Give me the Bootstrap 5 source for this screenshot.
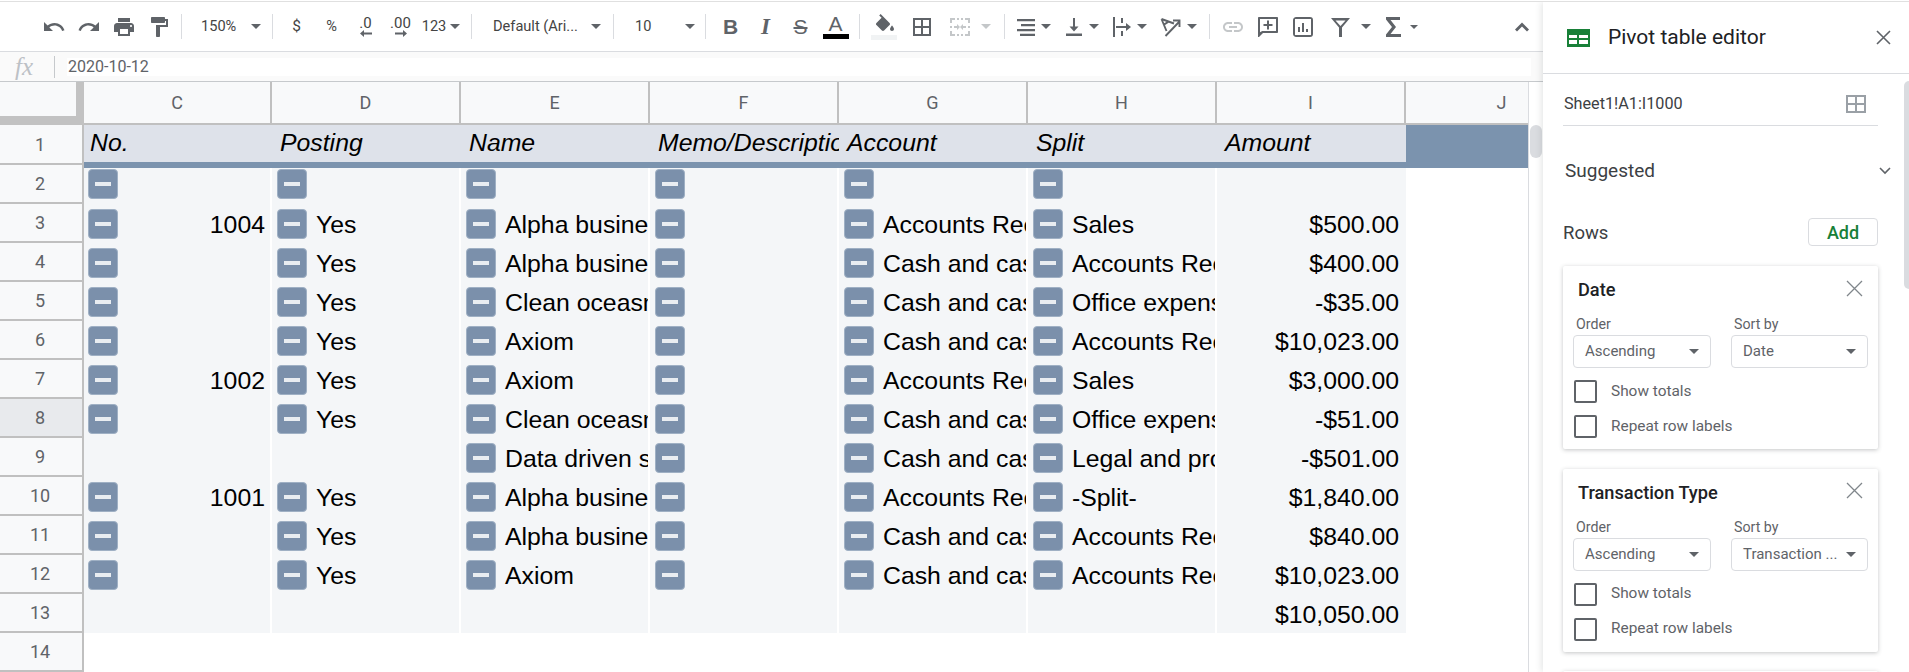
<!DOCTYPE html>
<html lang="en">
  <head>
    <meta charset="UTF-8" />
    <meta name="viewport" content="width=device-width, initial-scale=1.0" />
    <title>Pivot table</title>
    <link rel="stylesheet" href="https://cdn.jsdelivr.net/npm/bootstrap@5.3.0/dist/css/bootstrap.min.css" />
    <style>
      html, body { height: 672px; overflow: hidden; background: #fff; }
      body { font-family: Roboto, "Liberation Sans", sans-serif; color: #444; padding-top: 1px; }
      .app { height: 671px; border-top: 1px solid #e0e0e0; overflow: hidden; }

      .sheet-side { width: 1543px; flex: none; }
      .toolbar { height: 50px; border-bottom: 1px solid #dadce0; padding-left: 36px; font-size: 14.6px; color: #444; }
      .tb { width: 35px; height: 30px; flex: none; display: flex; align-items: center; justify-content: center; gap: 4px; }
      .tb svg { fill: #5f6368; display: block; }
      .tb-wide { width: 48px; gap: 6px; }
      .tb-merge { width: 52px; gap: 10px; }
      .tb-123 { width: 46px; gap: 4px; }
      .tb-filter { width: 52px; gap: 11px; }
      .tb-sigma { width: 50px; gap: 9px; }
      .tb-zoom { width: 90px; justify-content: space-between; padding: 0 11px 0 19px; }
      .tb-font { width: 141px; justify-content: space-between; padding: 0 12px 0 21px; }
      .tb-size { width: 91px; justify-content: space-between; padding: 0 10px 0 21px; }
      .tb-sep { width: 1px; height: 25px; background: #dadce0; flex: none; }
      .tb-gap-sm { width: 3px; flex: none; }
      .tb-gap { width: 5px; flex: none; }
      .tb-gap-six { width: 6px; flex: none; }
      .tb-gap-md { width: 7px; flex: none; }
      .tb-gap-lg { width: 8px; flex: none; }
      .tb-up { margin-right: 4px; }
      .caret { width: 0; height: 0; border-left: 5px solid transparent; border-right: 5px solid transparent; border-top: 5px solid #5f6368; flex: none; }
      .caret-off { border-top-color: #c4c7c9; }
      .caret-sm { border-left-width: 4px; border-right-width: 4px; border-top-width: 4px; }
      .tb-sym { font-size: 15.5px; padding-left: 2px; }
      .tb-pct { padding-left: 2px; }
      .dec { flex-direction: column; gap: 0; line-height: 15px; font-size: 15px; }
      .dec svg { margin-top: -1px; }
      .colour-icon { flex-direction: column; gap: 0; }
      .colour-bar { width: 26px; height: 5px; background: #000; margin-top: 1px; }
      .colour-bar-fill { background: #f1f3f4; }
      .tb-letter { font-size: 21px; line-height: 19px; color: #5f6368; font-weight: 500; font-family: "Liberation Sans", sans-serif; }
      .tb-italic { font-family: "Liberation Serif", serif; font-size: 23px; font-style: italic; font-weight: 700; }

      .formula { height: 30px; background: #fafafa; border-bottom: 1px solid #c6c9cc; color: #5f6368; font-size: 16px; padding-right: 12px; }
      .formula .fx { width: 54px; flex: none; font-family: "Liberation Serif", serif; font-style: italic; font-size: 25px; color: #bdc1c6; padding-left: 15px; line-height: 28px; }
      .formula .fx-sep { width: 1px; height: 22px; background: #c6c9cc; flex: none; }
      .formula .fx-input { background: #fff; height: 18px; line-height: 18px; margin-left: 12px; padding-left: 1px; }

      .corner { width: 84px; flex: none; height: 43px; background: #f8f9fa; border-right: 8px solid #c2c2c2; border-bottom: 9px solid #c2c2c2; }
      .col-heads { height: 43px; }
      .col-head { width: 189px; flex: none; height: 43px; background: #f8f9fa; border-right: 2px solid #c0c0c0; border-bottom: 2px solid #c0c0c0; color: #5f6368; font-size: 18px; display: flex; align-items: center; justify-content: center; }
      .col-head:first-child { width: 188px; }
      .col-head.j { width: 122px; border-right: 0; padding-left: 69px; }
      .grid-main { width: 1528px; flex: none; }
      .gutter { width: 15px; flex: none; border-left: 1px solid #dadce0; background: #fff; padding: 43px 1px 0 1px; }
      .thumb { height: 33px; background: #dadce0; border-radius: 6px; }

      .row-nums { width: 84px; flex: none; }
      .row-num { height: 39px; background: #f8f9fa; border-right: 2px solid #c0c0c0; border-bottom: 2px solid #c0c0c0; color: #5f6368; font-size: 18px; display: flex; align-items: center; justify-content: center; padding-right: 2px; }
      .row-num.first { height: 40px; }
      .row-num.active { background: #e8eaed; }

      .data { font-family: "Liberation Sans", Arial, sans-serif; font-size: 24.8px; color: #000; }
      .head-row { height: 43px; }
      .h-cell { width: 189px; flex: none; height: 43px; background: #dee2ea; border-bottom: 6px solid #7b93ae; font-style: italic; padding-left: 8px; line-height: 36px; overflow: hidden; white-space: nowrap; }
      .h-cell:first-child { width: 188px; padding-left: 6px; }
      .h-fill { width: 122px; flex: none; height: 43px; background: #7b93ae; }
      .d-row { height: 39px; }
      .d-row.second { height: 36px; align-items: flex-end; }
      .d-row.second .cell { height: 36px; padding-bottom: 5px; align-items: flex-end; }
      .cell { width: 189px; height: 39px; flex: none; background: #f4f6f8; border-right: 2px solid #fff; display: flex; align-items: center; gap: 9px; padding-left: 5px; padding-right: 5px; overflow: hidden; white-space: nowrap; }
      .cell:first-child { width: 188px; padding-left: 4px; padding-right: 5px; }
      .cell:nth-child(7) { border-right: 0; padding-right: 7px; }
      .cell span:not(.dash) { padding-top: 2px; }
      .toggle { width: 30px; height: 30px; flex: none; padding: 0; border: 1px solid #9fb0c4; border-radius: 4px; background: #7b90ab; display: flex; align-items: center; justify-content: center; }
      .toggle .dash { display: block; width: 16px; height: 4px; background: #e9edf1; }

      .panel { width: 366px; flex: none; box-shadow: -2px 0 6px rgba(60, 64, 67, .12); padding-top: 0; font-family: Roboto, sans-serif; }
      .panel-head { height: 72px; padding: 0 18px 0 24px; border-bottom: 1px solid #dadce0; }
      .panel-title { font-size: 21px; color: #202124; margin-left: 18px; }
      .panel-close { margin-left: auto; }
      .panel-body { padding: 0 31px 0 20px; }
      .range { height: 52px; border-bottom: 1px solid #dadce0; font-size: 16.2px; color: #3c4043; padding: 9px 12px 0 1px; }
      .suggested { height: 92px; font-size: 19px; color: #3c4043; padding: 0 0 2px 2px; margin-right: -13px; }
      .rows-head { font-size: 18.5px; color: #3c4043; height: 28px; margin-bottom: 20px; }
      .rows-head span { padding-top: 4px; }
      .btn-add { width: 70px; height: 28px; padding: 0; border: 1px solid #dadce0; border-radius: 4px; color: #188038; font-size: 18px; font-weight: 500; line-height: 25px; background: #fff; }
      .btn-add:hover { color: #188038; border-color: #dadce0; }
      .pv-card { width: 315px; height: 183px; margin-bottom: 19.5px; border: 0; border-radius: 2px; box-shadow: 0 1px 4px rgba(60, 64, 67, .3); padding: 14px 10px 0 10px; }
      .pv-title { font-size: 18.2px; font-weight: 500; color: #202124; padding-left: 5px; height: 20px; line-height: 20px; }
      .pv-x { margin-left: auto; margin-right: 5px; margin-top: -4px; }
      .pv-label { font-size: 14.2px; color: #5f6368; height: 18px; line-height: 18px; padding-left: 3px; margin-top: 15px; margin-bottom: 2px; }
      .pv-col { width: 138px; flex: none; }
      .pv-col + .pv-col { margin-left: 20px; width: 137px; }
      .pv-select { height: 33px; border: 1px solid #dadce0; border-radius: 4px; font-size: 15px; color: #5f6368; padding: 0 11px 0 11px; white-space: nowrap; }
      .pv-check { height: 23px; margin: 0 0 12px 1px; gap: 14px; min-height: 0; padding: 0; font-size: 15.4px; color: #5f6368; }
      .pv-check .form-check-input { width: 23px; height: 23px; border: 2px solid #5f6368; border-radius: 2px; margin: 0; float: none; flex: none; }
      .pv-checks { margin-top: 12px; }
      .panel-scroll { position: absolute; right: 0; top: 79px; width: 5px; height: 208px; background: #dadce0; border-radius: 5px 0 0 5px; }
    </style>
  </head>
  <body>
    <div class="app d-flex">
      <div class="sheet-side d-flex flex-column">
        <div class="toolbar d-flex align-items-center flex-shrink-0">
          <div class="tb"><svg width="24" height="24" viewBox="0 0 24 24"><path d="M12.5 8c-2.65 0-5.05.99-6.9 2.6L2 7v9h9l-3.62-3.62c1.39-1.16 3.16-1.88 5.12-1.88 3.54 0 6.55 2.31 7.6 5.5l2.37-.78C21.08 11.03 17.15 8 12.5 8z"/></svg></div>
          <div class="tb"><svg width="24" height="24" viewBox="0 0 24 24"><path d="M18.4 10.6C16.55 8.99 14.15 8 11.5 8c-4.65 0-8.58 3.03-9.96 7.22L3.9 16c1.05-3.19 4.05-5.5 7.6-5.5 1.95 0 3.73.72 5.12 1.88L13 16h9V7l-3.6 3.6z"/></svg></div>
          <div class="tb"><svg width="24" height="24" viewBox="0 0 24 24"><path d="M19 8H5c-1.66 0-3 1.34-3 3v6h4v4h12v-4h4v-6c0-1.66-1.34-3-3-3zm-3 11H8v-5h8v5zm3-7c-.55 0-1-.45-1-1s.45-1 1-1 1 .45 1 1-.45 1-1 1zm-1-9H6v4h12V3z"/></svg></div>
          <div class="tb"><svg width="24" height="24" viewBox="0 0 24 24"><path d="M18 4V3c0-.55-.45-1-1-1H5c-.55 0-1 .45-1 1v4c0 .55.45 1 1 1h12c.55 0 1-.45 1-1V6h1v4H9v11c0 .55.45 1 1 1h2c.55 0 1-.45 1-1v-9h8V4h-3z"/></svg></div>
          <div class="tb-gap"></div>
          <div class="tb-sep"></div>
          <div class="tb tb-zoom"><span>150%</span><span class="caret"></span></div>
          <div class="tb-sep"></div>
          <div class="tb-gap"></div>
          <div class="tb tb-sym">$</div>
          <div class="tb tb-pct">%</div>
          <div class="tb dec"><span>.0</span><svg width="12" height="7" viewBox="0 0 12 7"><path d="M4 0v2.5h8v2H4V7L0 3.5z"/></svg></div>
          <div class="tb dec"><span>.00</span><svg width="12" height="7" viewBox="0 0 12 7"><path d="M8 0v2.5H0v2h8V7l4-3.5z"/></svg></div>
          <div class="tb tb-123"><span>123</span><span class="caret"></span></div>
          <div class="tb-gap-md"></div>
          <div class="tb-sep"></div>
          <div class="tb tb-font"><span>Default (Ari...</span><span class="caret"></span></div>
          <div class="tb-sep"></div>
          <div class="tb tb-size"><span>10</span><span class="caret"></span></div>
          <div class="tb-sep"></div>
          <div class="tb-gap-md"></div>
          <div class="tb"><span class="tb-letter fw-bold">B</span></div>
          <div class="tb"><span class="tb-letter tb-italic">I</span></div>
          <div class="tb"><span class="tb-letter text-decoration-line-through">S</span></div>
          <div class="tb colour-icon"><span class="tb-letter">A</span><span class="colour-bar"></span></div>
          <div class="tb-gap-six"></div>
          <div class="tb-sep"></div>
          <div class="tb-gap-six"></div>
          <div class="tb colour-icon"><svg width="22" height="20" viewBox="0 0 22 20"><path d="M16.56 8.94L7.62 0 6.21 1.41l2.38 2.38-5.15 5.15c-.59.59-.59 1.54 0 2.12l5.5 5.5c.29.29.68.44 1.06.44s.77-.15 1.06-.44l5.5-5.5c.59-.58.59-1.53 0-2.12zM5.21 10h9.58L10 5.21zM19 11.5s-2 2.17-2 3.5c0 1.1.9 2 2 2s2-.9 2-2c0-1.33-2-3.5-2-3.5z"/></svg><span class="colour-bar colour-bar-fill"></span></div>
          <div class="tb-gap-sm"></div>
          <div class="tb"><svg width="24" height="24" viewBox="0 0 24 24"><path d="M3 3v18h18V3H3zm8 16H5v-6h6v6zm0-8H5V5h6v6zm8 8h-6v-6h6v6zm0-8h-6V5h6v6z"/></svg></div>
          <div class="tb-gap"></div>
          <div class="tb tb-merge"><svg width="22" height="22" viewBox="0 0 22 22"><path style="fill:#c4c7c9" d="M1 2h5v2H3v3H1zm15 0h5v5h-2V4h-3zM1 15h2v3h3v2H1zm18 0h2v5h-5v-2h3zM1 10h2v2H1zm18 0h2v2h-2zM5 10h3V8l3 3-3 3v-2H5zm12 0h-3V8l-3 3 3 3v-2h3zM8 2h2v2H8zm4 0h2v2h-2zM8 18h2v2H8zm4 0h2v2h-2z"/></svg><span class="caret caret-off"></span></div>
          <div class="tb-gap-lg"></div>
          <div class="tb-sep"></div>
          <div class="tb-gap"></div>
          <div class="tb tb-wide"><svg width="18" height="18" viewBox="0 0 18 18"><path d="M0 1h18v2.2H0zm4 5h14v2.2H4zM0 11h18v2.2H0zm3 4.8h15V18H3z"/></svg><span class="caret"></span></div>
          <div class="tb tb-wide"><svg width="18" height="18" viewBox="0 0 18 18"><path d="M8 0h2v8.5h3.5L9 13.5 4.5 8.5H8zM1 15.5h16V18H1z"/></svg><span class="caret"></span></div>
          <div class="tb tb-wide"><svg width="18" height="20" viewBox="0 0 18 20"><path d="M0 0h2v20H0zM8 1h2v5H8zm0 13h2v5H8zM3 9h10V6l5 4-5 4v-3H3z"/></svg><span class="caret"></span></div>
          <div class="tb tb-wide"><svg width="21" height="20" viewBox="0 0 21 20"><path d="M1.500 2L14 6.500M1.500 2L6.500 14M3.800 7.800L8.500 4.600M5.500 19L19 5M13 3.500h6.500V10" fill="none" stroke="#5f6368" stroke-width="1.900"/></svg><span class="caret"></span></div>
          <div class="tb-gap-md"></div>
          <div class="tb-sep"></div>
          <div class="tb-gap"></div>
          <div class="tb"><svg width="24" height="24" viewBox="0 0 24 24"><path style="fill:#c4c7c9" d="M3.9 12c0-1.71 1.39-3.1 3.1-3.1h4V7H7c-2.76 0-5 2.24-5 5s2.24 5 5 5h4v-1.9H7c-1.71 0-3.1-1.39-3.1-3.1zM8 13h8v-2H8v2zm9-6h-4v1.9h4c1.71 0 3.1 1.39 3.1 3.1s-1.39 3.1-3.1 3.1h-4V17h4c2.76 0 5-2.24 5-5s-2.24-5-5-5z"/></svg></div>
          <div class="tb"><svg width="22" height="22" viewBox="0 0 22 22"><path d="M2 1h18c.55 0 1 .45 1 1v14c0 .55-.45 1-1 1H6l-4 4H1V2c0-.55.45-1 1-1zm1 2v13.2L5.2 15H19V3zm7 1.500h2V8h3.5v2H12v3.5h-2V10H6.500V8H10z"/></svg></div>
          <div class="tb"><svg width="24" height="24" viewBox="0 0 24 24"><path d="M19 2H5C3.900 2 2 3 2 5v14c0 2 1.900 3 3 3h14c2 0 3-1 3-3V5c0-2-1-3-3-3zm1 18H4V4h16zM7 12h2v5H7zm4-4h2v9h-2zm4 6h2v3h-2z"/></svg></div>
          <div class="tb-gap"></div>
          <div class="tb tb-filter"><svg width="19" height="20" viewBox="0 0 19 20"><path fill-rule="evenodd" d="M0 1h19l-8 9.500V20H8v-9.500zm4.500 2.500L9.500 9l5-5.500z"/></svg><span class="caret"></span></div>
          <div class="tb tb-sigma"><svg width="15" height="20" viewBox="0 0 15 20"><path d="M0 0h14v3H4.500l5.500 7-5.500 7H15v3H0v-2.500L6 10 0 2.500z"/></svg><span class="caret caret-sm"></span></div>
          <div class="ms-auto tb tb-up"><svg width="24" height="24" viewBox="0 0 24 24"><path d="M7 16.500L12 11.500l5 5 2-2-7-7-7 7z"/></svg></div>
        </div>

        <div class="formula d-flex align-items-center flex-shrink-0">
          <div class="fx">fx</div>
          <div class="fx-sep"></div>
          <div class="fx-input flex-grow-1">2020-10-12</div>
        </div>

        <div class="d-flex flex-grow-1 overflow-hidden">
          <div class="grid-main">
            <div class="col-heads d-flex">
              <div class="corner"></div>
              <div class="d-flex" id="colHeads"></div>
            </div>
            <div class="d-flex">
              <div class="row-nums" id="rowNums"></div>
              <div class="data flex-grow-1">
                <div class="head-row d-flex" id="headRow"></div>
                <div id="dataRows"></div>
              </div>
            </div>
          </div>
          <div class="gutter"><div class="thumb"></div></div>
        </div>
      </div>

      <aside class="panel position-relative">
        <div class="panel-head d-flex align-items-center">
          <svg width="23" height="18" viewBox="0 0 23 18"><path fill="#188038" fill-rule="evenodd" d="M0 0h23v18H0zM2 6v3h8V6zm10 0v3h9V6zM2 11v4h8v-4zm10 0v4h9v-4z"/></svg>
          <span class="panel-title">Pivot table editor</span>
          <svg class="panel-close" width="15" height="15" viewBox="0 0 15 15"><path d="M1 1l13 13M14 1L1 14" stroke="#5f6368" stroke-width="1.6"/></svg>
        </div>
        <div class="panel-body">
          <div class="range d-flex align-items-center justify-content-between">
            <span>Sheet1!A1:I1000</span>
            <svg width="20" height="18" viewBox="0 0 20 18"><path fill="#9aa0a6" fill-rule="evenodd" d="M0 0h20v18H0zM2 2v6h7V2zm9 0v6h7V2zM2 10v6h7v-6zm9 0v6h7v-6z"/></svg>
          </div>
          <div class="suggested d-flex align-items-center justify-content-between">
            <span>Suggested</span>
            <svg width="12" height="8" viewBox="0 0 12 8"><path d="M1 1l5 5 5-5" fill="none" stroke="#5f6368" stroke-width="1.6"/></svg>
          </div>
          <div class="rows-head d-flex align-items-center justify-content-between">
            <span>Rows</span>
            <button class="btn btn-add">Add</button>
          </div>
          <div id="cards"></div>
        </div>
        <div class="panel-scroll"></div>
      </aside>
    </div>

    <script src="https://cdn.jsdelivr.net/npm/bootstrap@5.3.0/dist/js/bootstrap.bundle.min.js"></script>
    <script>
      const colLetters = ["C", "D", "E", "F", "G", "H", "I"];
      const headers = ["No.", "Posting", "Name", "Memo/Description", "Account", "Split", "Amount"];
      // no, posting, name, account, split, amount ("" = no toggle in that cell)
      const rows = [
        ["-", "-", "-", "-", "-", ""],
        ["1004", "Yes", "Alpha business", "Accounts Receivable", "Sales", "$500.00"],
        ["-", "Yes", "Alpha business", "Cash and cash equivalents", "Accounts Receivable", "$400.00"],
        ["-", "Yes", "Clean oceasn", "Cash and cash equivalents", "Office expenses", "-$35.00"],
        ["-", "Yes", "Axiom", "Cash and cash equivalents", "Accounts Receivable", "$10,023.00"],
        ["1002", "Yes", "Axiom", "Accounts Receivable", "Sales", "$3,000.00"],
        ["-", "Yes", "Clean oceasn", "Cash and cash equivalents", "Office expenses", "-$51.00"],
        ["", "", "Data driven solutions", "Cash and cash equivalents", "Legal and professional", "-$501.00"],
        ["1001", "Yes", "Alpha business", "Accounts Receivable", "-Split-", "$1,840.00"],
        ["-", "Yes", "Alpha business", "Cash and cash equivalents", "Accounts Receivable", "$840.00"],
        ["-", "Yes", "Axiom", "Cash and cash equivalents", "Accounts Receivable", "$10,023.00"],
        [null, null, null, null, null, "$10,050.00"]
      ];
      const pivots = [
        { title: "Date", sort: "Date" },
        { title: "Transaction Type", sort: "Transaction ..." }
      ];

      const toggle = '<button class="btn toggle"><span class="dash"></span></button>';
      const label = (v) => (v && v !== "-" ? v : "");

      document.getElementById("colHeads").innerHTML =
        colLetters.map((c) => `<div class="col-head">${c}</div>`).join("") + '<div class="col-head j">J</div>';

      let nums = "";
      for (let i = 1; i <= 15; i++) {
        nums += `<div class="row-num${i === 1 ? " first" : ""}${i === 8 ? " active" : ""}">${i}</div>`;
      }
      document.getElementById("rowNums").innerHTML = nums;

      document.getElementById("headRow").innerHTML =
        headers.map((h) => `<div class="h-cell">${h}</div>`).join("") + '<div class="h-fill"></div>';

      function renderRows() {
        let html = "";
        rows.forEach((r, i) => {
          const [no, posting, name, account, split, amount] = r;
          const hasToggle = (v) => v !== null && v !== "";
          html += `<div class="d-row d-flex${i === 0 ? " second" : ""}">
            <div class="cell">${hasToggle(no) ? toggle : ""}<span class="ms-auto">${label(no)}</span></div>
            <div class="cell">${hasToggle(posting) ? toggle : ""}<span>${label(posting)}</span></div>
            <div class="cell">${hasToggle(name) ? toggle : ""}<span>${label(name)}</span></div>
            <div class="cell">${hasToggle(name) ? toggle : ""}</div>
            <div class="cell">${hasToggle(account) ? toggle : ""}<span>${label(account)}</span></div>
            <div class="cell">${hasToggle(split) ? toggle : ""}<span>${label(split)}</span></div>
            <div class="cell"><span class="ms-auto">${amount}</span></div>
          </div>`;
        });
        document.getElementById("dataRows").innerHTML = html;
      }
      renderRows();

      function renderCards() {
        document.getElementById("cards").innerHTML = pivots.map((p) => `
          <div class="card pv-card">
            <div class="d-flex align-items-center">
              <span class="pv-title">${p.title}</span>
              <svg class="pv-x" width="17" height="17" viewBox="0 0 17 17"><path d="M1 1l15 15M16 1L1 16" stroke="#80868b" stroke-width="1.3"/></svg>
            </div>
            <div class="d-flex">
              <div class="pv-col">
                <div class="pv-label">Order</div>
                <div class="pv-select d-flex align-items-center justify-content-between"><span>Ascending</span><span class="caret"></span></div>
              </div>
              <div class="pv-col">
                <div class="pv-label">Sort by</div>
                <div class="pv-select d-flex align-items-center justify-content-between"><span>${p.sort}</span><span class="caret"></span></div>
              </div>
            </div>
            <div class="pv-checks">
              <div class="form-check d-flex align-items-center pv-check"><input class="form-check-input" type="checkbox" /><label class="form-check-label">Show totals</label></div>
              <div class="form-check d-flex align-items-center pv-check"><input class="form-check-input" type="checkbox" /><label class="form-check-label">Repeat row labels</label></div>
            </div>
          </div>`).join("") + '<div class="card pv-card"></div>';
      }
      renderCards();
    </script>
  </body>
</html>
